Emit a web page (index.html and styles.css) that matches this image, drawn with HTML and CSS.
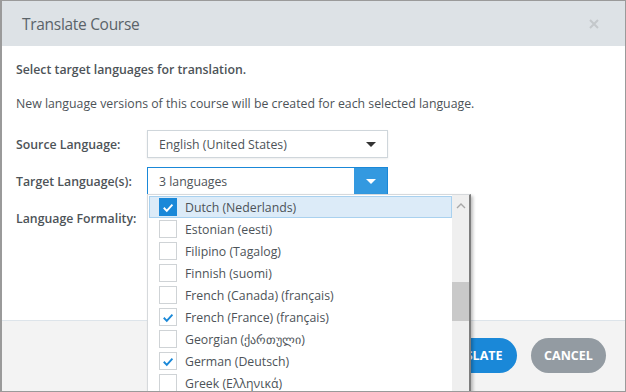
FILE: index.html
```html
<!DOCTYPE html>
<html>
<head>
<meta charset="utf-8">
<link rel="stylesheet" href="styles.css">
</head>
<body>
<div class="dialog">
  <div class="header">
    <span class="title">Translate Course</span>
    <svg class="close" viewBox="0 0 10 10" width="10" height="10"><path d="M1 1 L9 9 M9 1 L1 9" stroke="#c4c8cb" stroke-width="2"/></svg>
  </div>
  <div class="content">
    <p class="lead">Select target languages for translation.</p>
    <p class="desc">New language versions of this course will be created for each selected language.</p>
    <div class="row">
      <label class="lbl">Source Language:</label>
      <div class="select">
        <span class="val">English (United States)</span>
        <span class="caret dark"></span>
      </div>
    </div>
    <div class="row">
      <label class="lbl">Target Language(s):</label>
      <div class="select active">
        <span class="val">3 languages</span>
        <span class="btn"><span class="caret light"></span></span>
      </div>
    </div>
    <div class="row">
      <label class="lbl">Language Formality:</label>
    </div>
  </div>
  <div class="footer">
    <button class="pill primary">TRANSLATE</button>
    <button class="pill secondary">CANCEL</button>
  </div>

  <div class="dropdown">
    <ul class="list">
      <li class="item focus"><span class="cb on"><svg viewBox="0 0 17 17" width="17" height="17"><path d="M4 8.8 L7.2 12 L13.2 5.4" fill="none" stroke="#fff" stroke-width="2"/></svg></span>Dutch (Nederlands)</li>
      <li class="item"><span class="cb"></span>Estonian (eesti)</li>
      <li class="item"><span class="cb"></span>Filipino (Tagalog)</li>
      <li class="item"><span class="cb"></span>Finnish (suomi)</li>
      <li class="item"><span class="cb"></span>French (Canada) (français)</li>
      <li class="item"><span class="cb chk"><svg viewBox="0 0 17 17" width="17" height="17"><path d="M4 8.8 L7.2 12 L13.2 5.4" fill="none" stroke="#1a88d8" stroke-width="2"/></svg></span>French (France) (français)</li>
      <li class="item"><span class="cb"></span>Georgian (ქართული)</li>
      <li class="item"><span class="cb chk"><svg viewBox="0 0 17 17" width="17" height="17"><path d="M4 8.8 L7.2 12 L13.2 5.4" fill="none" stroke="#1a88d8" stroke-width="2"/></svg></span>German (Deutsch)</li>
      <li class="item"><span class="cb"></span>Greek (Ελληνικά)</li>
    </ul>
    <div class="scrollbar">
      <svg class="up" viewBox="0 0 10 6" width="10" height="6"><path d="M1 5 L5 1 L9 5" fill="none" stroke="#a8a8a8" stroke-width="1.4"/></svg>
      <div class="thumb"></div>
    </div>
  </div>
</div>
</body>
</html>
```

FILE: styles.css
```css
* { box-sizing: border-box; }
html, body { margin: 0; padding: 0; }
body {
  width: 626px; height: 392px; overflow: hidden;
  font-family: "Open Sans", "Noto Sans", sans-serif;
  color: #4d5358;
  background: #fff;
}
.dialog {
  position: relative;
  width: 626px; height: 392px;
  border: 1px solid #9a9a9a;
  border-left-width: 2px;
  display: flex; flex-direction: column;
  overflow: hidden;
}
.header {
  height: 45px;
  background: #dde2e6;
  display: flex; align-items: center; justify-content: space-between;
  padding: 0 26px 0 20px;
  flex: none;
}
.title { font-size: 15.5px; color: #5a6369; letter-spacing: -0.3px; }
.close { display: block; margin-top: 1px; }
.content {
  flex: 1;
  padding: 15px 14px 0 14px;
  font-size: 12.3px;
}
.lead { margin: 0 0 17px 0; font-weight: 600; line-height: 17px; }
.desc { margin: 0 0 18px 0; line-height: 17px; }
.row { display: flex; align-items: center; height: 28px; margin-bottom: 9px; }
.lbl { width: 131px; font-weight: 600; }
.select {
  width: 241px; height: 28px;
  border: 1px solid #cfd6db;
  box-shadow: 0 1px 2px rgba(0,0,0,0.08);
  display: flex; align-items: center; justify-content: space-between;
  padding-left: 11px;
  position: relative;
}
.select .val { color: #4d5358; }
.caret { width: 0; height: 0; border-left: 5px solid transparent; border-right: 5px solid transparent; border-top: 5px solid #333; }
.caret.dark { margin-right: 11px; }
.caret.light { border-top-color: #fff; }
.select.active { border-color: #1a88d8; box-shadow: none; }
.btn {
  width: 33px; height: 26px;
  background: #3399e0;
  display: flex; align-items: center; justify-content: center;
}
.footer {
  height: 71px; flex: none;
  background: #f3f3f3;
  border-top: 1px solid #dde4ea;
  display: flex; align-items: center; justify-content: flex-end;
  padding: 0 19px 1px 0;
  gap: 14px;
}
.pill {
  height: 35px; border: none; border-radius: 18px;
  font-family: "Open Sans", sans-serif; font-weight: 700; font-size: 12.5px;
  color: #fff; padding: 0 0;
}
.primary { background: #1a88d8; width: 100px; }
.secondary { background: #939ba2; width: 75px; }

.dropdown {
  position: absolute;
  left: 145px; top: 193px;
  width: 324px; height: 210px;
  background: #fff;
  border: 1px solid #d6d9dc;
  border-right: 2px solid #7d7d7d;
  box-shadow: 2px 2px 3px rgba(0,0,0,0.25);
  display: flex;
}
.list { list-style: none; margin: 0; padding: 1px 0 0 1px; flex: 1; font-size: 12.3px; }
.item { height: 22px; display: flex; align-items: center; padding-left: 10px; color: #4d5358; }
.item.focus { background: #dcebf8; border: 1px solid #a9d1ef; padding-left: 9px; }
.cb {
  width: 18px; height: 18px; border: 1px solid #cfd3d6; background: #fff;
  margin-right: 8px; display: flex; align-items: center; justify-content: center; flex: none;
}
.cb.on { background: #1a88d8; border-color: #1a88d8; }
.cb svg { display: block; }
.scrollbar { width: 17px; background: #efefef; position: relative; }
.up { position: absolute; left: 4px; top: 8px; }
.thumb { position: absolute; left: 0; right: 0; top: 87px; height: 39px; background: #c9c9c9; }
```
